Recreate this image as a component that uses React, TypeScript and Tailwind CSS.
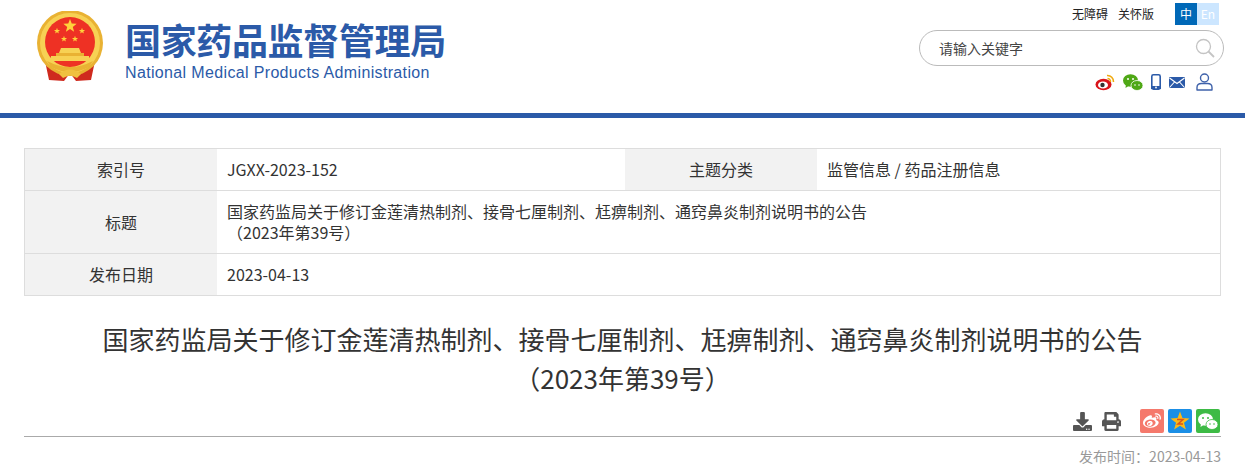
import { FaDownload, FaPrint, FaWeibo } from 'react-icons/fa'

const cjk = { fontFamily: '"Noto Sans CJK SC", "Noto Sans", sans-serif' }

const Star = ({ cx, cy, r, fill = '#ffd23c' }: { cx: number; cy: number; r: number; fill?: string }) => {
  const pts = []
  for (let i = 0; i < 10; i++) {
    const rad = i % 2 === 0 ? r : r * 0.42
    const a = (Math.PI / 5) * i - Math.PI / 2
    pts.push(`${cx + rad * Math.cos(a)},${cy + rad * Math.sin(a)}`)
  }
  return <polygon points={pts.join(' ')} fill={fill} />
}

const Emblem = () => (
  <svg width="66" height="70" viewBox="0 0 66 70">
    {/* ribbons */}
    <path d="M8 50 L12 69 L27 70 L33 62 L39 70 L54 69 L58 50 L33 60 Z" fill="#cf2a1e" />
    <circle cx="33" cy="32" r="33" fill="#e9b233" />
    <circle cx="33" cy="32" r="30" fill="#f7d154" />
    <circle cx="33" cy="31" r="25" fill="#ee3124" />
    <Star cx={33} cy={15} r={7} />
    <Star cx={20} cy={20} r={3.2} />
    <Star cx={45} cy={20} r={3.2} />
    <Star cx={27} cy={28} r={3.2} />
    <Star cx={38} cy={28} r={3.2} />
    {/* gate */}
    <path d="M24 37 H42 L44 42 H22 Z" fill="#f7d154" />
    <rect x="19" y="42" width="28" height="3" fill="#e9b233" />
    <rect x="14" y="45" width="38" height="5" fill="#f7d154" />
    <path d="M10 50 Q33 62 56 50 L52 56 Q33 66 14 56 Z" fill="#e9b233" />
    <path d="M22 63 Q33 54 44 63 L40 67 L33 64 L26 67 Z" fill="#f0c040" />
  </svg>
)

const WeiboColor = () => (
  <svg width="20" height="18" viewBox="0 0 20 18">
    <ellipse cx="8.5" cy="11.5" rx="8" ry="5.8" fill="#d9151b" />
    <ellipse cx="8" cy="12" rx="5" ry="3.6" fill="#fff" />
    <circle cx="7.5" cy="12" r="2.2" fill="#333" />
    <path d="M12 2.5 a6 6 0 0 1 6.5 6.5" fill="none" stroke="#efa90f" strokeWidth="1.6" />
    <path d="M12.5 5.5 a3 3 0 0 1 3 3.5" fill="none" stroke="#efa90f" strokeWidth="1.4" />
  </svg>
)

const WechatColor = () => (
  <svg width="20" height="17" viewBox="0 0 20 17">
    <ellipse cx="7.5" cy="6.5" rx="7.5" ry="6.2" fill="#4fa816" />
    <path d="M3 10 L2.5 14 L7 11 Z" fill="#4fa816" />
    <ellipse cx="14" cy="11.5" rx="6" ry="5" fill="#4fa816" stroke="#fff" strokeWidth="0.8" />
    <circle cx="5" cy="5" r="1" fill="#fff" />
    <circle cx="10" cy="5" r="1" fill="#fff" />
    <circle cx="12" cy="11" r="0.8" fill="#fff" />
    <circle cx="16" cy="11" r="0.8" fill="#fff" />
  </svg>
)

const Phone = () => (
  <svg width="10" height="16" viewBox="0 0 10 16">
    <rect x="0.8" y="0.8" width="8.4" height="14.4" rx="1.6" fill="#fff" stroke="#2b5aa8" strokeWidth="1.6" />
    <rect x="0" y="12" width="10" height="3" fill="#2b5aa8" />
    <circle cx="5" cy="13.5" r="0.9" fill="#fff" />
  </svg>
)

const Mail = () => (
  <svg width="16" height="11" viewBox="0 0 16 11">
    <rect width="16" height="11" rx="1" fill="#2b5aa8" />
    <path d="M0.5 1 L8 6.5 L15.5 1 M0.5 10.5 L5.5 5 M15.5 10.5 L10.5 5" fill="none" stroke="#fff" strokeWidth="1.1" />
  </svg>
)

const User = () => (
  <svg width="17" height="18" viewBox="0 0 17 18">
    <circle cx="8.5" cy="5" r="4" fill="none" stroke="#3f62aa" strokeWidth="1.4" />
    <path d="M1 17 V14.5 Q1 10.5 5.5 10.5 H11.5 Q16 10.5 16 14.5 V17 Z" fill="none" stroke="#3f62aa" strokeWidth="1.4" strokeLinejoin="round" />
  </svg>
)

const Row = ({ className, children }: { className: string; children: React.ReactNode }) => (
  <div className={`flex border-b border-[#ddd] last:border-b-0 ${className}`}>{children}</div>
)

const Label = ({ children }: { children: React.ReactNode }) => (
  <div className="flex w-[192px] shrink-0 items-center justify-center bg-[#f2f2f2]">{children}</div>
)

const Value = ({ children, className = '' }: { children: React.ReactNode; className?: string }) => (
  <div className={`flex items-center px-[10px] ${className}`}>{children}</div>
)

export default function App() {
  return (
    <div className="h-[472px] overflow-hidden bg-white text-[#333]" style={cjk}>
      {/* header */}
      <header className="flex h-[118px] justify-between border-b-[5px] border-[#2b5aa8] pl-[37px] pr-[21px]">
        <div className="flex pt-[11px]">
          <Emblem />
          <div className="ml-[22px] pt-[6px] text-[#2b5aa8]">
            <div className="text-[36px] leading-[44px] font-bold whitespace-nowrap tracking-[-0.35px]">国家药品监督管理局</div>
            <div
              className="mt-[2px] text-[16px] leading-[20px] whitespace-nowrap tracking-[0.35px]"
              style={{ fontFamily: '"Liberation Sans", sans-serif' }}
            >
              National Medical Products Administration
            </div>
          </div>
        </div>

        <div className="flex w-[305px] flex-col">
          <div className="flex h-[30px] items-start justify-end pt-[3px] pr-[5px] text-[12px] text-[#222]">
            <span className="leading-[22px]">无障碍</span>
            <span className="ml-[10px] leading-[22px]">关怀版</span>
            <span className="ml-[21px] h-[22px] w-[22px] bg-[#0068b7] text-center leading-[22px] text-white">中</span>
            <span className="h-[22px] w-[22px] bg-[#cce6ff] text-center leading-[22px] text-white">En</span>
          </div>
          <div className="flex h-[36px] items-center justify-between rounded-full border border-[#bbb] pr-[8px] pl-[19px] text-[14px] text-[#444]">
            <span>请输入关键字</span>
            <svg width="20" height="20" viewBox="0 0 20 20" fill="none" stroke="#c4c4c4" strokeWidth="1.3">
              <circle cx="8.5" cy="8.5" r="7" />
              <path d="M13.5 13.5 L19 19" strokeWidth="1.8" />
            </svg>
          </div>
          <div className="mt-[7px] flex items-center justify-end gap-[8px] pr-[11px]">
            <WeiboColor />
            <WechatColor />
            <Phone />
            <Mail />
            <span className="ml-[3px]">
              <User />
            </span>
          </div>
        </div>
      </header>

      <main className="px-[24px] pt-[30px]">
        {/* info table */}
        <div className="border border-[#ddd] text-[16px] leading-[21px] text-[#333]">
          <Row className="h-[42px]">
            <Label>索引号</Label>
            <Value className="w-[408px]">JGXX-2023-152</Value>
            <Label>主题分类</Label>
            <Value>监管信息 / 药品注册信息</Value>
          </Row>
          <Row className="h-[63px]">
            <Label>标题</Label>
            <Value>
              <div>
                国家药监局关于修订金莲清热制剂、接骨七厘制剂、尪痹制剂、通窍鼻炎制剂说明书的公告
                <br />
                （2023年第39号）
              </div>
            </Value>
          </Row>
          <Row className="h-[41px]">
            <Label>发布日期</Label>
            <Value>2023-04-13</Value>
          </Row>
        </div>

        {/* title */}
        <h1 className="mt-[23px] text-center text-[26px] leading-[39px] font-normal text-[#333]">
          国家药监局关于修订金莲清热制剂、接骨七厘制剂、尪痹制剂、通窍鼻炎制剂说明书的公告
          <br />
          （2023年第39号）
        </h1>

        {/* share row */}
        <div className="mt-[12px] flex h-[28px] items-start justify-end gap-[4px] border-b border-[#aaa] pr-[1px]">
          <FaDownload className="mt-[3px] mr-[6px] text-[19px] text-[#555]" />
          <FaPrint className="mt-[3px] mr-[15px] text-[19px] text-[#555]" />
          <span className="flex h-[24px] w-[24px] items-center justify-center rounded-[2px] bg-[#f5796c]">
            <FaWeibo className="text-[18px] text-white" />
          </span>
          <span className="flex h-[24px] w-[24px] items-center justify-center rounded-[2px] bg-[#1b8fe6]">
            <svg width="20" height="20" viewBox="0 0 20 20">
              <Star cx={10} cy={10.5} r={10} fill="#fbb917" />
              <path d="M7 8.5 H13 L8 13 H13" fill="none" stroke="#d9541e" strokeWidth="1.5" />
            </svg>
          </span>
          <span className="flex h-[24px] w-[24px] items-center justify-center rounded-[2px] bg-[#3dbb45]">
            <svg width="20" height="17" viewBox="0 0 20 17">
              <ellipse cx="7.5" cy="6.5" rx="7.5" ry="6.2" fill="#fff" />
              <path d="M3 10 L2.5 14 L7 11 Z" fill="#fff" />
              <ellipse cx="14" cy="11.5" rx="6" ry="5" fill="#fff" stroke="#3dbb45" strokeWidth="0.8" />
              <circle cx="5" cy="5" r="1" fill="#3dbb45" />
              <circle cx="10" cy="5" r="1" fill="#3dbb45" />
              <circle cx="12" cy="11" r="0.8" fill="#3dbb45" />
              <circle cx="16" cy="11" r="0.8" fill="#3dbb45" />
            </svg>
          </span>
        </div>

        <div className="mt-[9px] text-right text-[14px] leading-[20px] text-[#999]">发布时间：2023-04-13</div>
      </main>
    </div>
  )
}
